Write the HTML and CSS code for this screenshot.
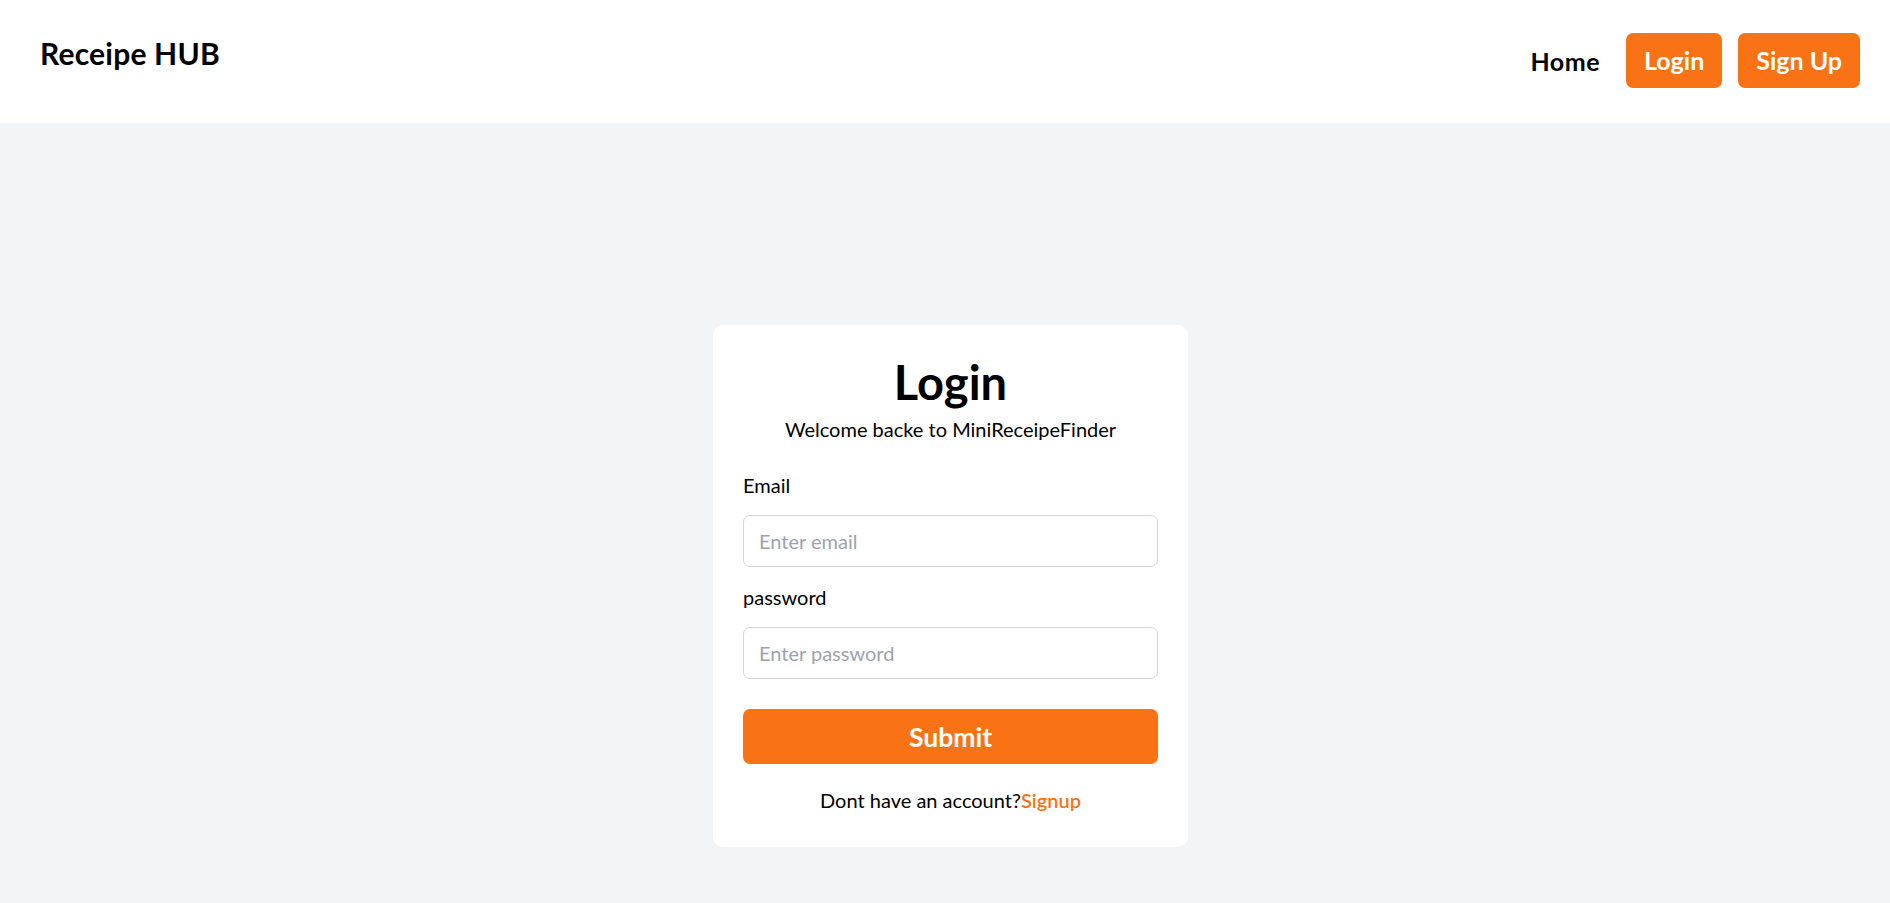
FILE: index.html
```html
<!DOCTYPE html>
<html lang="en">
<head>
<meta charset="utf-8">
<title>Receipe HUB</title>
<link rel="stylesheet" href="styles.css">
</head>
<body>
<header class="topbar">
  <div class="logo">Receipe HUB</div>
  <nav class="nav">
    <a class="nav-link" href="#">Home</a>
    <a class="nav-btn" href="#">Login</a>
    <a class="nav-btn" href="#">Sign Up</a>
  </nav>
</header>
<main class="main">
  <div class="card">
    <h1 class="title">Login</h1>
    <p class="subtitle">Welcome backe to MiniReceipeFinder</p>
    <form class="form">
      <label class="label">Email</label>
      <input class="input" type="email" placeholder="Enter email">
      <label class="label">password</label>
      <input class="input" type="password" placeholder="Enter password">
      <button class="submit" type="button">Submit</button>
    </form>
    <p class="footer-text">Dont have an account?<a class="signup" href="#">Signup</a></p>
  </div>
</main>
</body>
</html>
```
FILE: styles.css
```css
* { box-sizing: border-box; }
html, body { margin: 0; padding: 0; }
body {
  font-family: "Segoe UI", Lato, "Noto Sans", sans-serif;
  background: #f3f4f6;
  color: #000;
  min-height: 903px;
}
.topbar {
  background: #fff;
  height: 123px;
  display: flex;
  justify-content: space-between;
  align-items: flex-start;
  padding: 33px 30px 0 40px;
}
.logo {
  font-size: 30px;
  font-weight: 700;
  line-height: 40px;
  letter-spacing: 0.2px;
}
.nav {
  display: flex;
  align-items: center;
  gap: 16px;
}
.nav-link {
  font-size: 25px;
  font-weight: 700;
  color: #000;
  text-decoration: none;
  margin-right: 10px;
  letter-spacing: 0.5px;
}
.nav-btn {
  font-size: 25px;
  font-weight: 700;
  color: #fff;
  background: #f97316;
  text-decoration: none;
  border-radius: 7px;
  height: 55px;
  line-height: 55px;
  padding: 0 18px;
}
.main {
  display: flex;
  justify-content: center;
  padding: 202px 0 60px 11px;
}
.card {
  width: 475px;
  background: #fff;
  border-radius: 10px;
  padding: 32px 30px 32px;
  text-align: center;
}
.title {
  margin: 0;
  font-size: 47px;
  line-height: 50px;
  font-weight: 700;
}
.subtitle {
  margin: 7px 0 0;
  font-size: 20px;
  line-height: 30px;
}
.form {
  display: flex;
  flex-direction: column;
  text-align: left;
  margin-top: 26px;
}
.label {
  font-size: 20px;
  line-height: 30px;
  margin-bottom: 15px;
}
.input {
  height: 52px;
  border: 1px solid #d1d5db;
  border-radius: 7px;
  padding: 0 15px;
  font-family: inherit;
  font-size: 20px;
  color: #000;
  margin-bottom: 15px;
  outline: none;
}
.input::placeholder { color: #9ca3af; }
.submit {
  margin-top: 15px;
  height: 55px;
  border: none;
  border-radius: 7px;
  background: #f97316;
  color: #fff;
  font-family: inherit;
  font-size: 26.5px;
  font-weight: 700;
}
.footer-text {
  margin: 21px 0 0;
  font-size: 20px;
  line-height: 30px;
}
.signup {
  color: #f97316;
  font-weight: 600;
  text-decoration: none;
}
```
